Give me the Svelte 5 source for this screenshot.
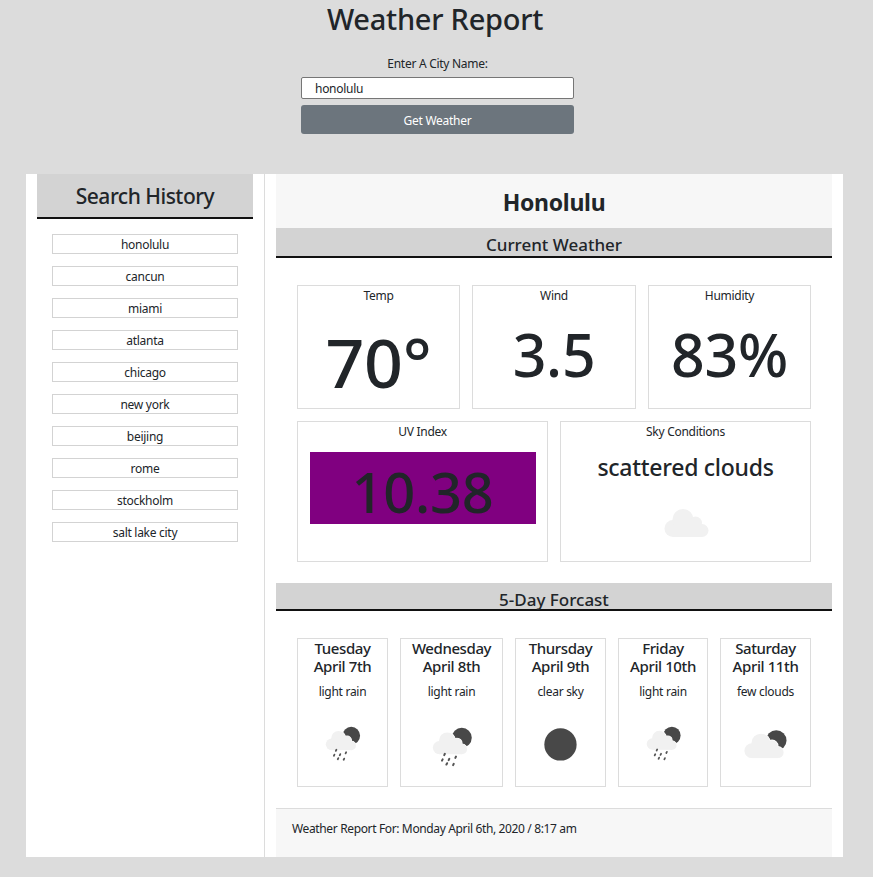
<script>
  const history = ['honolulu', 'cancun', 'miami', 'atlanta', 'chicago', 'new york', 'beijing', 'rome', 'stockholm', 'salt lake city'];
  const forecast = [
    { day: 'Tuesday', date: 'April 7th', sky: 'light rain', icon: 'rain' },
    { day: 'Wednesday', date: 'April 8th', sky: 'light rain', icon: 'rain' },
    { day: 'Thursday', date: 'April 9th', sky: 'clear sky', icon: 'clear' },
    { day: 'Friday', date: 'April 10th', sky: 'light rain', icon: 'rain' },
    { day: 'Saturday', date: 'April 11th', sky: 'few clouds', icon: 'few' }
  ];
  const drops = [[37, 62], [33, 72], [45, 71], [57, 67], [41, 79], [53, 80]];
</script>

{#snippet cloud()}
  <circle cx="24" cy="61" r="17" />
  <circle cx="44" cy="43" r="21" />
  <circle cx="69" cy="50" r="13" />
  <circle cx="82" cy="65" r="13" />
  <rect x="24" y="55" width="58" height="23" />
{/snippet}

{#snippet moon(x, y, r)}
  <circle cx={x} cy={y} {r} fill="#484848" />
{/snippet}

<header class="top">
  <h1>Weather Report</h1>
  <form class="search" on:submit|preventDefault>
    <label for="city">Enter A City Name:</label>
    <input id="city" type="text" value="honolulu" />
    <button type="submit">Get Weather</button>
  </form>
</header>

<div class="board">
  <aside class="history">
    <h2>Search History</h2>
    <ul>
      {#each history as city}
        <li>{city}</li>
      {/each}
    </ul>
  </aside>

  <main class="report">
    <h3 class="city">Honolulu</h3>
    <h4 class="bar">Current Weather</h4>

    <section class="current">
      <div class="row three">
        <div class="tile"><span>Temp</span><strong class="temp">70°</strong></div>
        <div class="tile"><span>Wind</span><strong>3.5</strong></div>
        <div class="tile"><span>Humidity</span><strong>83%</strong></div>
      </div>
      <div class="row two">
        <div class="tile tall">
          <span>UV Index</span>
          <div class="uv">10.38</div>
        </div>
        <div class="tile tall">
          <span>Sky Conditions</span>
          <p class="sky">scattered clouds</p>
          <svg class="sky-icon" viewBox="0 0 100 100" aria-hidden="true">
            <g fill="#f1f1f1">{@render cloud()}</g>
          </svg>
        </div>
      </div>
    </section>

    <h4 class="bar bar-forecast">5-Day Forcast</h4>

    <section class="forecast">
      {#each forecast as f}
        <div class="tile day">
          <b>{f.day}</b>
          <b>{f.date}</b>
          <span>{f.sky}</span>
          <svg viewBox="0 0 100 100" aria-hidden="true">
            {#if f.icon === 'clear'}
              {@render moon(50, 50, 33)}
            {:else if f.icon === 'few'}
              {@render moon(72, 42, 21)}
              <g transform="translate(0.6 8.4) scale(.91 .89)">
                <g fill="#fff" stroke="#fff" stroke-width="3">{@render cloud()}</g>
                <g fill="#f1f1f1">{@render cloud()}</g>
              </g>
            {:else}
              {@render moon(68, 32, 18)}
              <g transform="translate(11 7) scale(.7)">
                <g fill="#fff" stroke="#fff" stroke-width="3">{@render cloud()}</g>
                <g fill="#f1f1f1">{@render cloud()}</g>
              </g>
              {#each drops as d}
                <line x1={d[0] + 0.6} y1={d[1] - 1.2} x2={d[0] - 0.6} y2={d[1] + 1.2} stroke="#555" stroke-width="3.6" stroke-linecap="round" />
              {/each}
            {/if}
          </svg>
        </div>
      {/each}
    </section>

    <footer class="stamp">Weather Report For: Monday April 6th, 2020 / 8:17 am</footer>
  </main>
</div>

<style>
  :global(body) {
    background: #dcdcdc;
    color: #212529;
    font-family: "Noto Sans", "Open Sans", sans-serif;
    font-size: 12px;
    letter-spacing: -0.28px;
  }

  .top {
    height: 174px;
    text-align: center;
  }

  h1 {
    margin: 0;
    padding-right: 3px;
    font-size: 29px;
    font-weight: 500;
    line-height: 38px;
    letter-spacing: -0.25px;
  }

  .search {
    display: flex;
    flex-direction: column;
    width: 273px;
    margin: 18px 0 0 301px;
  }

  label {
    line-height: 16px;
    margin-bottom: 5px;
  }

  input {
    box-sizing: border-box;
    height: 22px;
    padding: 0 13px;
    border: 1px solid #767676;
    border-radius: 2px;
    background: #fff;
    color: #212529;
    font: inherit;
    letter-spacing: inherit;
  }

  button {
    height: 29px;
    margin-top: 6px;
    padding: 2px 0 0;
    border: 0;
    border-radius: 3px;
    background: #6c757d;
    color: #fff;
    font: inherit;
    letter-spacing: inherit;
  }

  .board {
    display: flex;
    width: 817px;
    height: 683px;
    margin-left: 26px;
    background: #fff;
  }

  .history {
    box-sizing: border-box;
    width: 239px;
    padding: 0 11px;
    border-right: 1px solid #dcdcdc;
  }

  h2 {
    box-sizing: border-box;
    width: 216px;
    height: 45px;
    margin: 0;
    background: #d3d3d3;
    border-bottom: 2px solid #111;
    font-size: 21px;
    font-weight: 500;
    line-height: 45px;
    text-align: center;
    letter-spacing: -0.5px;
  }

  ul {
    display: flex;
    flex-direction: column;
    gap: 12px;
    margin: 15px 0 0 15px;
    padding: 0;
    width: 186px;
    list-style: none;
  }

  li {
    box-sizing: border-box;
    height: 20px;
    border: 1px solid #d3d3d3;
    line-height: 20px;
    text-align: center;
  }

  .report {
    display: flex;
    flex-direction: column;
    width: 556px;
    margin-left: 11px;
  }

  .city {
    height: 54px;
    margin: 0;
    background: #f7f7f7;
    font-size: 23px;
    font-weight: 700;
    line-height: 57px;
    text-align: center;
  }

  .bar {
    box-sizing: border-box;
    height: 30px;
    margin: 0;
    background: #d3d3d3;
    border-bottom: 2px solid #111;
    font-size: 17px;
    font-weight: 500;
    line-height: 34px;
    text-align: center;
    letter-spacing: 0;
  }

  .bar-forecast {
    height: 28px;
    line-height: 33px;
  }

  .current {
    display: flex;
    flex-direction: column;
    gap: 12px;
    padding: 27px 21px 21px;
  }

  .row {
    display: grid;
    gap: 12px;
  }

  .three {
    grid-template-columns: 163px 164px 163px;
    height: 124px;
  }

  .two {
    grid-template-columns: 251px 251px;
    height: 141px;
  }

  .tile {
    box-sizing: border-box;
    display: flex;
    flex-direction: column;
    align-items: center;
    border: 1px solid #dcdcdc;
    padding-top: 1px;
    line-height: 17px;
  }

  .tile strong {
    font-size: 59px;
    font-weight: 500;
    line-height: 90px;
    margin-top: 5px;
  }

  .tile .temp {
    font-size: 68px;
    margin-top: 13px;
  }

  .uv {
    box-sizing: border-box;
    width: 226px;
    height: 72px;
    margin-top: 12px;
    background: #800080;
    font-size: 56px;
    font-weight: 500;
    line-height: 79px;
    text-align: center;
  }

  .sky {
    margin: 12px 0 0;
    font-size: 23px;
    font-weight: 500;
    line-height: 30px;
  }

  .sky-icon {
    width: 50px;
    height: 50px;
    margin-top: 16px;
  }

  .forecast {
    display: grid;
    grid-template-columns: 91px 103px 91px 90px 91px;
    gap: 12px;
    height: 149px;
    padding: 27px 21px 21px;
  }

  .day {
    height: 149px;
    padding-top: 0;
  }

  .day b {
    font-size: 15px;
    font-weight: 500;
    line-height: 18px;
    white-space: nowrap;
    letter-spacing: -0.4px;
  }

  .day span {
    margin-top: 8px;
  }

  .day svg {
    width: 55%;
    margin-top: 20px;
  }

  .stamp {
    height: 49px;
    box-sizing: border-box;
    padding: 12px 16px;
    background: #f7f7f7;
    border-top: 1px solid #dcdcdc;
    line-height: 16px;
    letter-spacing: -0.36px;
  }
</style>
